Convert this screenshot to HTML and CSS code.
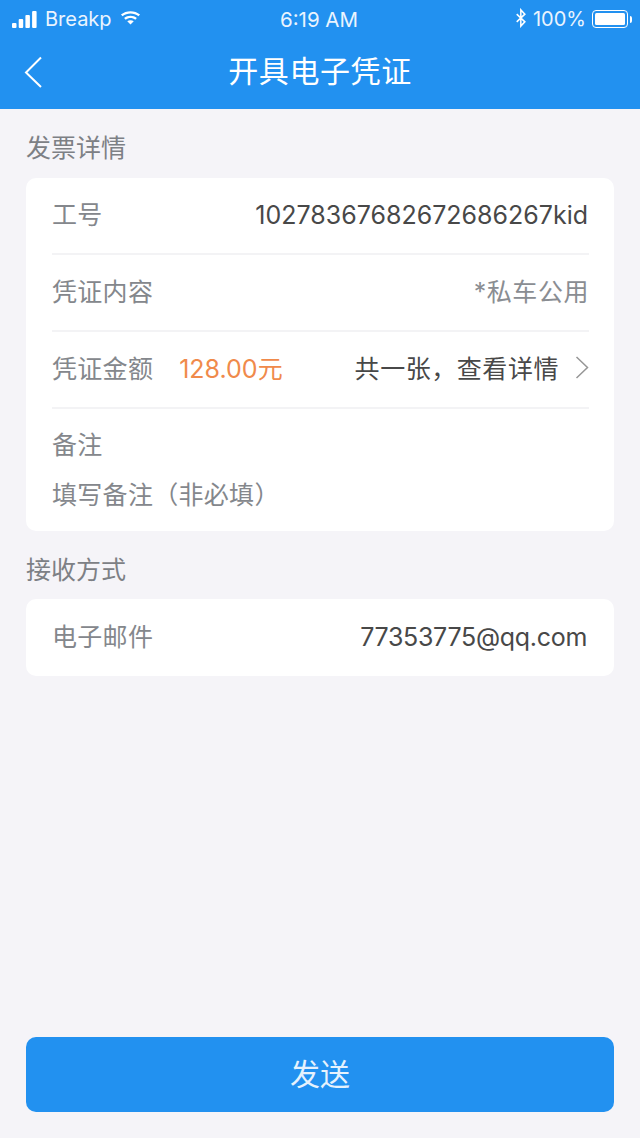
FILE: index.html
```html
<!DOCTYPE html>
<html lang="zh-CN">
  <head>
    <meta charset="UTF-8" />
    <meta name="viewport" content="width=device-width, initial-scale=1.0" />
    <title>开具电子凭证</title>
    <link rel="stylesheet" href="styles.css">
  </head>
  <body>
    <div class="page">
      <header class="header">
        <div class="status">
          <div class="status-left">
            <svg class="signal" width="25" height="17" viewBox="0 0 25 17">
              <rect x="0" y="12" width="4.500" height="5" rx="1" />
              <rect x="6.700" y="8" width="4.500" height="9" rx="1" />
              <rect x="13.400" y="4" width="4.500" height="13" rx="1" />
              <rect x="20.100" y="0" width="4.500" height="17" rx="1" />
            </svg>
            <span>Breakp</span>
            <svg class="wifi" width="21" height="16" viewBox="0 0 22 16">
              <path d="M1 5.500C6.500.8 15.500.8 21 5.500l-1.700 1.800C14.800 3.500 7.200 3.500 2.700 7.300z" />
              <path d="M4.300 9C8 5.800 14 5.800 17.700 9L16 10.800c-2.800-2.300-7.200-2.300-10 0z" />
              <path d="M7.600 12.400c2-1.500 4.800-1.500 6.800 0L11 15.800z" />
            </svg>
          </div>
          <div class="status-time">6:19 AM</div>
          <div class="status-right">
            <svg class="bt" width="12" height="20" viewBox="0 0 14 22">
              <path d="M2 6.500l9.500 9L6.800 20.500V1.500l4.700 5L2 15.500" />
            </svg>
            <span>100%</span>
            <div class="battery"><div class="battery-fill"></div></div>
            <div class="battery-tip"></div>
          </div>
        </div>
        <div class="nav">
          <svg class="back" width="20" height="32" viewBox="0 0 20 32">
            <path d="M17 1.500L2 16.500l15 14.500" />
          </svg>
          <h1 class="nav-title">开具电子凭证</h1>
        </div>
      </header>

      <main class="content">
        <h2 class="section-title">发票详情</h2>
        <section class="card">
          <div class="row">
            <span class="label">工号</span>
            <span class="value latin">10278367682672686267kid</span>
          </div>
          <div class="row">
            <span class="label">凭证内容</span>
            <span class="value cjk muted">*私车公用</span>
          </div>
          <div class="row">
            <span class="label">凭证金额</span>
            <span class="amount">128.00元</span>
            <span class="value cjk">共一张，查看详情</span>
            <svg class="chevron" width="14" height="24" viewBox="0 0 14 24">
              <path d="M1.500 1l11 10.500-11 10.500" />
            </svg>
          </div>
          <div class="note">
            <div class="label">备注</div>
            <div class="label">填写备注（非必填）</div>
          </div>
        </section>

        <h2 class="section-title second">接收方式</h2>
        <section class="card">
          <div class="row">
            <span class="label">电子邮件</span>
            <span class="value latin email">77353775@qq.com</span>
          </div>
        </section>
      </main>

      <div class="footer">
        <button class="send">发送</button>
      </div>
    </div>
  </body>
</html>
```

FILE: styles.css
```css
* {
  box-sizing: border-box;
}

body {
  margin: 0;
  font-family: Inter, "Noto Sans CJK SC", sans-serif;
  background-color: #f5f4f8;
  color: #444;
}

.page {
  display: flex;
  flex-direction: column;
  height: 1138px;
}

.header {
  background-color: #2291f0;
  color: #fff;
  height: 109px;
}

.status {
  display: flex;
  align-items: center;
  justify-content: space-between;
  height: 36px;
  padding: 2px 8px 0 12px;
  font-size: 20px;
  color: #eaf4fe;
}

.status-left,
.status-right {
  display: flex;
  align-items: center;
}

.status-left {
  width: 197px;
}

.status-right {
  width: 203px;
  justify-content: flex-end;
}

.status-time {
  font-size: 20.500px;
}

.status-left span {
  margin-left: 8px;
}

.signal,
.wifi {
  fill: #fff;
}

.wifi {
  margin-left: 8px;
  margin-bottom: 4px;
}

.bt {
  fill: none;
  stroke: #fff;
  stroke-width: 1.800;
  margin-right: 6px;
  margin-bottom: 2px;
}

.battery {
  width: 36px;
  height: 18px;
  margin-left: 6px;
  padding: 2px;
  border: 1.500px solid #fff;
  border-radius: 4px;
}

.battery-fill {
  height: 100%;
  background-color: #fff;
  border-radius: 1.500px;
}

.battery-tip {
  width: 2px;
  height: 7px;
  margin-left: 2px;
  background-color: #fff;
  border-radius: 0 2px 2px 0;
}

.nav {
  position: relative;
  display: flex;
  align-items: center;
  justify-content: center;
  height: 73px;
  padding-bottom: 7px;
}

.back {
  position: absolute;
  left: 24px;
  top: 20px;
  fill: none;
  stroke: #fff;
  stroke-width: 2;
}

.nav-title {
  margin: 0;
  font-size: 30px;
  font-weight: 400;
  letter-spacing: 0.600px;
}

.content {
  flex: 1;
  padding: 0 26px;
}

.section-title {
  margin: 0;
  height: 69px;
  padding-top: 21px;
  font-size: 25px;
  line-height: 36px;
  font-weight: 400;
  color: #7d8085;
}

.section-title.second {
  height: 68px;
  padding-top: 21px;
}

.card {
  background-color: #fff;
  border-radius: 10px;
  padding: 0 25px 0 26px;
}

.row {
  display: flex;
  align-items: center;
  height: 77px;
  padding-bottom: 6px;
  border-bottom: 2px solid #f3f3f5;
}

.card > .row:last-child {
  border-bottom: none;
  padding-bottom: 6px;
}

.label {
  font-size: 25px;
  letter-spacing: 0.300px;
  color: #84878c;
}

.value {
  margin-left: auto;
  font-size: 25px;
  color: #484848;
}

.value.latin {
  margin-top: 4px;
  margin-right: 1px;
}

.value.cjk {
  letter-spacing: 0.550px;
}

.value.muted {
  color: #8a8d92;
}

.value.email {
  letter-spacing: -0.300px;
  margin-right: 2px;
}

.amount {
  margin-left: 26px;
  font-size: 25px;
  color: #f08a4b;
}

.chevron {
  margin-left: 16px;
  margin-top: 2px;
  fill: none;
  stroke: #969696;
  stroke-width: 1.500;
}

.note {
  display: flex;
  flex-direction: column;
  gap: 14px;
  height: 122px;
  padding-top: 16px;
}

.footer {
  padding: 0 26px 26px;
}

.send {
  display: block;
  width: 100%;
  height: 75px;
  padding-bottom: 6px;
  border: none;
  border-radius: 10px;
  background-color: #2291f0;
  color: #e6f2fd;
  font-family: inherit;
  font-size: 30px;
}
```
